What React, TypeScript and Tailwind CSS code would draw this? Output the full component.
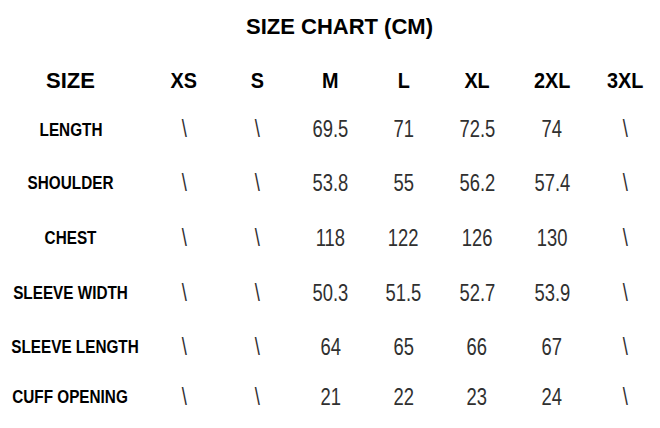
const sizes = ['XS', 'S', 'M', 'L', 'XL', '2XL', '3XL']

const rows = [
  { label: 'LENGTH', h: 'h-[43px]', values: ['\\', '\\', '69.5', '71', '72.5', '74', '\\'] },
  { label: 'SHOULDER', h: 'h-[64px]', values: ['\\', '\\', '53.8', '55', '56.2', '57.4', '\\'] },
  { label: 'CHEST', h: 'h-[46px]', values: ['\\', '\\', '118', '122', '126', '130', '\\'] },
  { label: 'SLEEVE WIDTH', h: 'h-[64px]', values: ['\\', '\\', '50.3', '51.5', '52.7', '53.9', '\\'] },
  { label: 'SLEEVE LENGTH', h: 'h-[44px]', values: ['\\', '\\', '64', '65', '66', '67', '\\'] },
  { label: 'CUFF OPENING', h: 'h-[56px]', values: ['\\', '\\', '21', '22', '23', '24', '\\'] },
]

// label column + one column per size, centred on the picture's columns
const cols = 'grid grid-cols-[147px_73.5px_73.5px_73px_73px_74px_76px_1fr] items-center'

const App = () => {
  return (
    <div className="w-[660px] h-[428px] bg-white overflow-hidden font-['Liberation_Sans',Arial,sans-serif]">
      <div className="h-[54px] pl-[19px] flex items-center justify-center">
        <h1 className="text-[22px] leading-none font-bold text-black">SIZE CHART (CM)</h1>
      </div>

      <div className={`${cols} h-[54px]`}>
        <div className="pr-[6px] text-center text-[22px] leading-none font-bold text-black">SIZE</div>
        {sizes.map((s) => (
          <div key={s} className="text-center text-[22px] leading-none font-bold text-black">
            <span className="inline-block scale-x-[0.9]">{s}</span>
          </div>
        ))}
      </div>

      {rows.map((row) => (
        <div key={row.label} className={`${cols} ${row.h}`}>
          <div className="pr-[6px] text-center text-[18px] leading-none font-bold text-black whitespace-nowrap">
            <span className="inline-block scale-x-[0.85]">{row.label}</span>
          </div>
          {row.values.map((v, i) => (
            <div key={i} className="text-center text-[23px] leading-none text-[#303030]">
              <span className="inline-block scale-x-[0.8]">{v}</span>
            </div>
          ))}
        </div>
      ))}
    </div>
  )
}

export default App
